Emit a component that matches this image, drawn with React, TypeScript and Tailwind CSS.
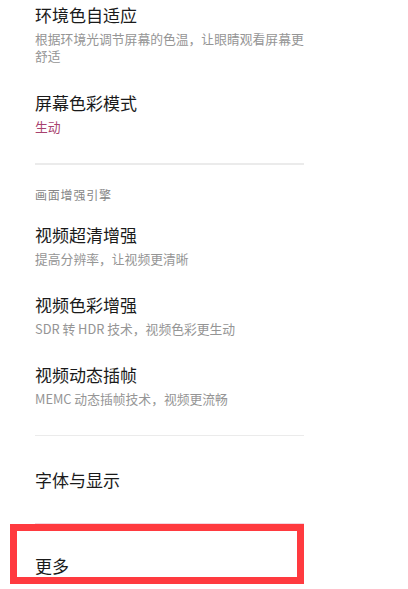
import React from "react";

const font = { fontFamily: '"Noto Sans CJK SC", "Noto Sans", sans-serif' };

function Item({ title, sub, subClass, className }: { title: string; sub: string; subClass?: string; className?: string }) {
  return (
    <div className={className}>
      <div className="text-[17px] leading-[22px] text-[#1a1a1a]">{title}</div>
      <div className={"mt-[4px] text-[12.8px] leading-[17px] " + (subClass ?? "text-[#959595]")}>{sub}</div>
    </div>
  );
}

export default function App() {
  return (
    <div className="relative w-[408px] h-[589px] overflow-hidden bg-white" style={font}>
      <div className="w-[304px] pl-[35px] flex flex-col">
        <Item className="pt-[4px] w-[270px]" title="环境色自适应" sub="根据环境光调节屏幕的色温，让眼睛观看屏幕更舒适" />
        <Item className="mt-[28px]" title="屏幕色彩模式" sub="生动" subClass="text-[#a8426e]" />
        <div className="mt-[28px] h-[1.5px] bg-[#ebebeb]" />
        <div className="mt-[21px] text-[12px] leading-[17px] text-[#868686] tracking-[0.8px]">画面增强引擎</div>
        <Item className="mt-[21px]" title="视频超清增强" sub="提高分辨率，让视频更清晰" />
        <Item className="mt-[27px]" title="视频色彩增强" sub="SDR 转 HDR 技术，视频色彩更生动" />
        <Item className="mt-[27px]" title="视频动态插帧" sub="MEMC 动态插帧技术，视频更流畅" />
        <div className="mt-[28px] h-[1.5px] bg-[#ebebeb]" />
        <div className="mt-[33px] text-[17px] leading-[22px] text-[#1a1a1a]">字体与显示</div>
        <div className="mt-[32px] h-[1px] bg-[#f3d6e1]" />
        <div className="mt-[31px] text-[17px] leading-[22px] text-[#1a1a1a]">更多</div>
      </div>
      <div className="absolute left-[10px] top-[524px] w-[294px] h-[60px] border-[7px] border-[#ff3a3f]" />
    </div>
  );
}
